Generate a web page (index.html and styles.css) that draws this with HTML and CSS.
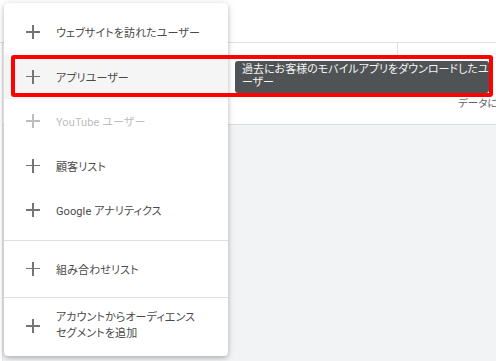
FILE: index.html
```html
<!DOCTYPE html>
<html lang="ja">
<head>
    <meta charset="UTF-8">
    <title>オーディエンス</title>
    <link rel="stylesheet" href="styles.css">
</head>
<body>
    <div class="page">
        <div class="top">
            <div class="head-row"></div>
            <div class="table-row">
                <div class="cell-line"></div>
                <div class="data-note">データに</div>
            </div>
        </div>
        <div class="lower"></div>
    </div>

    <div class="menu">
        <div class="group">
            <div class="item"><span class="plus"></span><span>ウェブサイトを訪れたユーザー</span></div>
            <div class="item active"><span class="plus"></span><span>アプリユーザー</span></div>
            <div class="item disabled"><span class="plus"></span><span>YouTube ユーザー</span></div>
            <div class="item"><span class="plus"></span><span>顧客リスト</span></div>
            <div class="item"><span class="plus"></span><span>Google アナリティクス</span></div>
        </div>
        <div class="group group-mid">
            <div class="item"><span class="plus"></span><span>組み合わせリスト</span></div>
        </div>
        <div class="group group-last">
            <div class="item item-tall"><span class="plus"></span><span>アカウントからオーディエンス<br>セグメントを追加</span></div>
        </div>
    </div>

    <div class="tooltip">過去にお客様のモバイルアプリをダウンロードしたユ<br>ーザー</div>
    <div class="mark"></div>
</body>
</html>
```

FILE: styles.css
```css
body {
    margin: 0;
    font-family: Roboto, "Noto Sans CJK JP", sans-serif;
    background: #fff;
    overflow: hidden;
}
.page {
    width: 496px;
    height: 361px;
    display: flex;
    flex-direction: column;
}
.top {
    height: 124px;
    background: #fff;
}
.head-row {
    height: 42px;
    border-bottom: 1px solid #e0e0e0;
}
.table-row {
    height: 81px;
    border-left: 1px solid #e6e6e6;
    margin-left: 2px;
    position: relative;
}
.cell-line {
    position: absolute;
    left: 394px;
    top: 0;
    width: 1px;
    height: 16px;
    background: #e0e0e0;
}
.data-note {
    position: absolute;
    left: 455px;
    top: 52px;
    font-size: 10.5px;
    color: #5f6368;
    white-space: nowrap;
    font-feature-settings: "palt";
}
.lower {
    flex: 1;
    background: #f1f3f4;
    border-top: 1px solid #dadce0;
    border-left: 1px solid #e6e6e6;
    margin-left: 2px;
}

/* menu */
.menu {
    position: absolute;
    left: 4px;
    top: 3px;
    width: 224px;
    height: 353px;
    background: #fff;
    border-radius: 4px;
    box-shadow: 0 2px 4px rgba(0, 0, 0, 0.2), 0 1px 8px rgba(0, 0, 0, 0.12);
    display: flex;
    flex-direction: column;
}
.group {
    padding: 7px 0 7.5px;
    border-bottom: 1px solid #e0e0e0;
}
.group-mid {
    padding: 5.5px 0 6.5px;
}
.group-last {
    border-bottom: none;
    padding: 0;
}
.item {
    height: 44.5px;
    display: flex;
    align-items: center;
    gap: 16px;
    padding-left: 22px;
    font-size: 11px;
    color: #4a4a4a;
    font-feature-settings: "palt";
    letter-spacing: 0.1px;
}
.group-mid .item {
    height: 44px;
}
.item-tall {
    height: auto;
    padding-top: 12px;
    padding-bottom: 14px;
    line-height: 16px;
}
.item.active {
    background: #f5f5f5;
}
.item.disabled {
    color: #bdbdbd;
}
.plus {
    width: 14px;
    height: 14px;
    flex: none;
    position: relative;
}
.plus::before,
.plus::after {
    content: "";
    position: absolute;
    background: #757575;
}
.plus::before {
    left: 0;
    top: 6px;
    width: 14px;
    height: 1.6px;
}
.plus::after {
    left: 6.2px;
    top: 0;
    width: 1.6px;
    height: 14px;
}
.disabled .plus::before,
.disabled .plus::after {
    background: #bdbdbd;
}

/* tooltip and annotation */
.tooltip {
    position: absolute;
    left: 235px;
    top: 61px;
    width: 247px;
    height: 25px;
    padding: 2px 0 5px 7px;
    background: #505356;
    border-radius: 3px;
    color: #f5f5f5;
    font-size: 11px;
    line-height: 13px;
    white-space: nowrap;
    font-feature-settings: "palt";
}
.mark {
    position: absolute;
    left: 11px;
    top: 55px;
    width: 474px;
    height: 34px;
    border: 4px solid #f00;
    border-radius: 3px;
}
```
